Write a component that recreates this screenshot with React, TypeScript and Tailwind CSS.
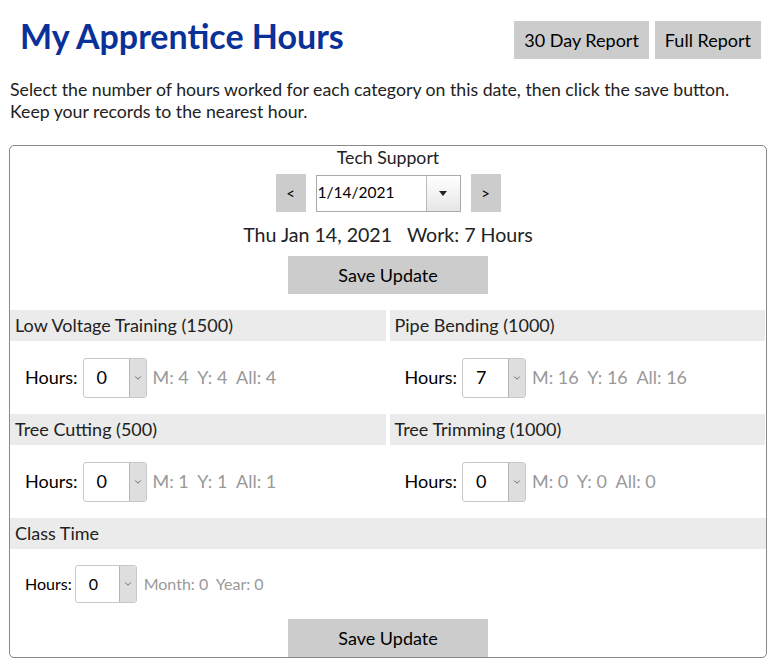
import { ChevronDown } from "lucide-react";

type Category = {
  name: string;
  hours: number;
  m: number;
  y: number;
  all: number;
};

const rows: Category[][] = [
  [
    { name: "Low Voltage Training (1500)", hours: 0, m: 4, y: 4, all: 4 },
    { name: "Pipe Bending (1000)", hours: 7, m: 16, y: 16, all: 16 },
  ],
  [
    { name: "Tree Cutting (500)", hours: 0, m: 1, y: 1, all: 1 },
    { name: "Tree Trimming (1000)", hours: 0, m: 0, y: 0, all: 0 },
  ],
];

function HoursSelect({ value, small }: { value: number; small?: boolean }) {
  return (
    <div
      className={
        small
          ? "flex h-[38px] w-[62px] rounded-[3px] border border-[#c8c8c8] bg-white"
          : "flex h-[40px] w-[64px] rounded-[3px] border border-[#c8c8c8] bg-white"
      }
    >
      <span className="flex flex-1 items-center pl-[13px] text-black">{value}</span>
      <span className="flex w-[17px] items-center justify-center border-l border-[#b5b5b5] bg-[#dedede]">
        <ChevronDown className="h-[10px] w-[10px] text-[#555]" strokeWidth={2} />
      </span>
    </div>
  );
}

function CategoryCell({ cat }: { cat: Category }) {
  return (
    <div>
      <div className="flex h-[31px] items-center bg-[#ebebeb] px-[5px] text-[18px] text-[#222]">{cat.name}</div>
      <div className="flex h-[73px] items-center gap-[5px] pl-[15px] text-[18px]">
        <span className="text-black">Hours:</span>
        <HoursSelect value={cat.hours} />
        <span className="ml-[1px] text-[#999]">
          M: {cat.m}&nbsp;&nbsp;Y: {cat.y}&nbsp;&nbsp;All: {cat.all}
        </span>
      </div>
    </div>
  );
}

export default function App() {
  return (
    <div className="min-h-[669px] w-[779px] bg-white font-['Lato','Open_Sans',sans-serif] text-[#222]">
      <div className="flex items-start justify-between pl-[20px] pr-[18px] pt-[14px]">
        <h1 className="text-[34px] font-bold leading-[44px] text-[#0a3198]">My Apprentice Hours</h1>
        <div className="mt-[7px] flex gap-[6px]">
          <button className="h-[38px] bg-[#cccccc] px-[10px] text-[18px] text-black">30 Day Report</button>
          <button className="h-[38px] bg-[#cccccc] px-[10px] text-[18px] text-black">Full Report</button>
        </div>
      </div>

      <p className="mt-[20px] px-[10px] text-[17.7px] leading-[22px] text-[#222]">
        Select the number of hours worked for each category on this date, then click the save button.
        <br />
        Keep your records to the nearest hour.
      </p>

      <div className="mx-[9px] mt-[22px] w-[758px] rounded-[5px] border border-[#888] pb-0">
        <div className="flex flex-col items-center">
          <div className="mt-[1px] text-[17.7px] leading-[22px]">Tech Support</div>
          <div className="mt-[5px] flex items-center gap-[10px]">
            <button className="h-[38px] w-[30px] bg-[#cccccc] text-[15px] text-black">&lt;</button>
            <div className="flex h-[37px] w-[145px] border border-[#aaa] bg-white">
              <span className="flex flex-1 items-center pl-[1px] text-[15.5px] text-black">1/14/2021</span>
              <span className="flex w-[34px] items-center justify-center border-l border-[#bbb] bg-gradient-to-b from-white to-[#e6e6e6]">
                <svg width="8" height="5" viewBox="0 0 8 5">
                  <path d="M0 0h8L4 5z" fill="#222" />
                </svg>
              </span>
            </div>
            <button className="h-[38px] w-[30px] bg-[#cccccc] text-[15px] text-black">&gt;</button>
          </div>
          <div className="mt-[10px] text-[19.6px] leading-[26px]">
            Thu Jan 14, 2021&nbsp;&nbsp;&nbsp;Work: 7 Hours
          </div>
          <button className="mt-[8px] h-[38px] w-[200px] bg-[#cccccc] text-[18px] text-black">Save Update</button>
        </div>

        <div className="mt-[16px]">
          {rows.map((row, i) => (
            <div key={i} className="grid grid-cols-2 gap-x-[4px] pr-[1px]">
              {row.map((cat) => (
                <CategoryCell key={cat.name} cat={cat} />
              ))}
            </div>
          ))}
          <div className="flex h-[31px] items-center bg-[#ebebeb] px-[5px] text-[18px] text-[#222]">Class Time</div>
          <div className="flex h-[70px] items-center gap-[3px] pl-[15px] text-[16px]">
            <span className="text-black">Hours:</span>
            <HoursSelect value={0} small />
            <span className="ml-[4px] text-[#999]">Month: 0&nbsp;&nbsp;Year: 0</span>
          </div>
          <div className="flex justify-center">
            <button className="h-[38px] w-[200px] bg-[#cccccc] text-[18px] text-black">Save Update</button>
          </div>
        </div>
      </div>
    </div>
  );
}
